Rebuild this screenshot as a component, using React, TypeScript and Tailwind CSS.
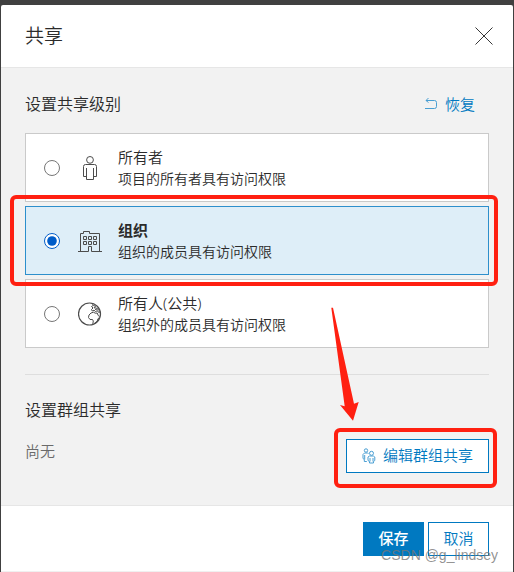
import React, { useState } from 'react';

type Level = 'owner' | 'org' | 'public';

const OwnerIcon: React.FC = () => (
  <svg className="h-6 w-6 shrink-0" viewBox="0 0 24 24" fill="none" stroke="#4c4c4c" aria-hidden="true">
    <circle cx="12" cy="3.9" r="3.4" />
    <path d="M8.5 20.5h-3V10.5Q5.5 8.5 7.5 8.5h9Q18.5 8.5 18.5 10.5v10h-3" />
    <path d="M8.5 12v11.5h7V12" />
  </svg>
);

const OrgIcon: React.FC = () => (
  <svg className="h-6 w-6 shrink-0" viewBox="0 0 24 24" fill="none" stroke="#4c4c4c" aria-hidden="true">
    <path d="M2.5 22.5V4.5h3v-2h6v2h10v18" />
    <path d="M0 22.5h10.5v-5h3v5H24" />
    <path d="M5.5 7.5h3v3h-3zM10.5 7.5h3v3h-3zM15.5 7.5h3v3h-3zM5.5 12.5h3v3h-3zM10.5 12.5h3v3h-3zM15.5 12.5h3v3h-3z" />
  </svg>
);

const GlobeIcon: React.FC = () => (
  <svg className="h-6 w-6 shrink-0" viewBox="0 0 24 24" fill="none" stroke="#4c4c4c" aria-hidden="true">
    <circle cx="11.5" cy="12" r="11" strokeWidth="1.2" />
    <path d="M15.5 10.2l-2.5.8-2 2-.5 2.500 1.500 2h2.500l.8 1.500-.6 3.500M21.500 15.500l-1.500 1.200-.8 2.500-3 2.500" />
    <path d="M14 1.500l1.500 1.800-2 1.200 1.500 1.500-1.500 1.500.8 1.500 1.700-.8 1.500 1.300 2-.8.8 1.500 2-.2" />
    <path d="M15.500 3.500l2 .8-1.500 1.500 2.500.2 1.200 1.300M15.500 10.200l1.700 1 2-.2 1 2.500 1.300 1M17 7.500l2.500-.5 1.700 1.500" />
  </svg>
);

const UndoIcon: React.FC = () => (
  <svg className="h-3 w-3 shrink-0" viewBox="0 0 12 12" fill="none" stroke="#4a9fd3" aria-hidden="true">
    <path d="M3.5 0L1 2.5l2.500 2M1 2.500h8.500Q11.500 2.500 11.500 4.500v4Q11.500 10.500 9.500 10.500H0" />
  </svg>
);

const GroupIcon: React.FC = () => (
  <svg className="h-4 w-3.5 shrink-0" viewBox="0 0 14 16" fill="none" stroke="#4a9fd3" aria-hidden="true">
    <circle cx="4" cy="2.5" r="1.700" />
    <circle cx="9.500" cy="5.300" r="2" />
    <path d="M6.500 5.500L5.500 5H2.500L1 6.500v4l1.300 1v2h2.500M2.700 7v4.500" />
    <path d="M7.500 8L6 9v3.500l1.500 1V15h4v-1.500l1.300-1V9l-1.500-1zM8 10v3.500M11 10v3.500" />
  </svg>
);

const levels: { id: Level; title: string; description: string; icon: React.ReactNode }[] = [
  { id: 'owner', title: '所有者', description: '项目的所有者具有访问权限', icon: <OwnerIcon /> },
  { id: 'org', title: '组织', description: '组织的成员具有访问权限', icon: <OrgIcon /> },
  { id: 'public', title: '所有人(公共)', description: '组织外的成员具有访问权限', icon: <GlobeIcon /> },
];

export default function App() {
  const [level, setLevel] = useState<Level>('org');

  return (
    <div className="min-h-screen bg-[#404040] px-px pt-[5px] font-['Noto_Sans','Noto_Sans_CJK_SC',sans-serif] font-[350] text-[#2b2b2b]">
      <div role="dialog" aria-labelledby="share-title" className="relative rounded-t-[2px] bg-white">
        <header className="flex h-[63px] items-center justify-between border-b border-[#e6e6e6] pr-5 pl-6">
          <h1 id="share-title" className="text-[19px] leading-6">共享</h1>
          <button type="button" aria-label="关闭" className="text-[#202020]">
            <svg className="h-[18px] w-[18px]" viewBox="0 0 18 18" fill="none" stroke="currentColor" strokeWidth="0.9">
              <path d="M.5 .5l17 17M17.5 .5l-17 17" />
            </svg>
          </button>
        </header>

        <main className="bg-[#f2f2f2] px-6 pt-6 pb-8">
          <div className="mb-[17px] flex items-center justify-between">
            <h2 id="level-title" className="text-base leading-6">设置共享级别</h2>
            <button type="button" className="mr-3.5 flex items-center gap-2 text-[15px] leading-6 text-[#0079c1]">
              <UndoIcon />
              恢复
            </button>
          </div>

          <div role="radiogroup" aria-labelledby="level-title" className="flex flex-col gap-1">
            {levels.map((item) => {
              const selected = item.id === level;
              return (
                <label
                  key={item.id}
                  className={`relative flex min-h-[69px] items-center border pl-[18px] ${
                    selected ? 'border-[#2d8fcc] bg-[#deeef8]' : 'border-[#cacaca] bg-white'
                  }`}
                >
                  <input
                    type="radio"
                    name="level"
                    checked={selected}
                    onChange={() => setLevel(item.id)}
                    className="mr-[18px] h-4 w-4 shrink-0 accent-[#005cc8]"
                  />
                  {item.icon}
                  <span className="ml-4 flex flex-col leading-[22px]">
                    <span className={`text-[15px] ${selected ? 'font-bold' : ''}`}>{item.title}</span>
                    <span className="text-sm leading-[22px]">{item.description}</span>
                  </span>
                  {item.id === 'org' && (
                    <span className="pointer-events-none absolute -top-3 -right-[10px] -bottom-3 -left-4 z-10 rounded-md border-4 border-[#ff2011]" />
                  )}
                </label>
              );
            })}
          </div>

          <section className="relative mt-[26px] border-t border-[#dedede] pt-[23px]">
            <h2 className="mb-[17px] text-base leading-6">设置群组共享</h2>
            <div className="flex items-start justify-between">
              <p className="text-[15px] leading-6 text-[#6a6a6a]">尚无</p>
              <button
                type="button"
                className="relative flex h-[34px] items-center border border-[#0079c1] bg-white px-[15px] pb-0.5 text-[15px] text-[#0079c1]"
              >
                <span className="mr-[7px] pt-0.5">
                  <GroupIcon />
                </span>
                编辑群组共享
                <span className="pointer-events-none absolute -top-3 -right-[9px] -bottom-4 -left-[13px] rounded-md border-4 border-[#ff2011]" />
              </button>
            </div>
            <svg className="pointer-events-none absolute -top-[68px] right-[130px] h-[114px] w-7" viewBox="0 0 28 114" aria-hidden="true">
              <path d="M.3 .7H2l21 96 4.700-1.700L22 113.700 9 98l4.700 1.300z" fill="#ff2011" />
            </svg>
          </section>
        </main>

        <footer className="flex justify-end gap-1 border-t border-b border-t-[#e6e6e6] border-b-[#f0f0f0] px-6 pt-4 pb-[15px]">
          <button type="button" className="h-[34px] w-[61px] border border-[#0079c1] bg-[#0079c1] pb-0.5 text-[15px] font-medium text-white">
            保存
          </button>
          <button type="button" className="h-[34px] w-[61px] border border-[#0079c1] bg-white pb-0.5 text-[15px] text-[#0079c1]">
            取消
          </button>
        </footer>

        <span className="pointer-events-none absolute right-[15px] bottom-1.5 font-['Liberation_Sans',sans-serif] text-sm leading-[22px] font-normal text-[#777777]/80">
          CSDN @g_lindsey
        </span>
      </div>
    </div>
  );
}
